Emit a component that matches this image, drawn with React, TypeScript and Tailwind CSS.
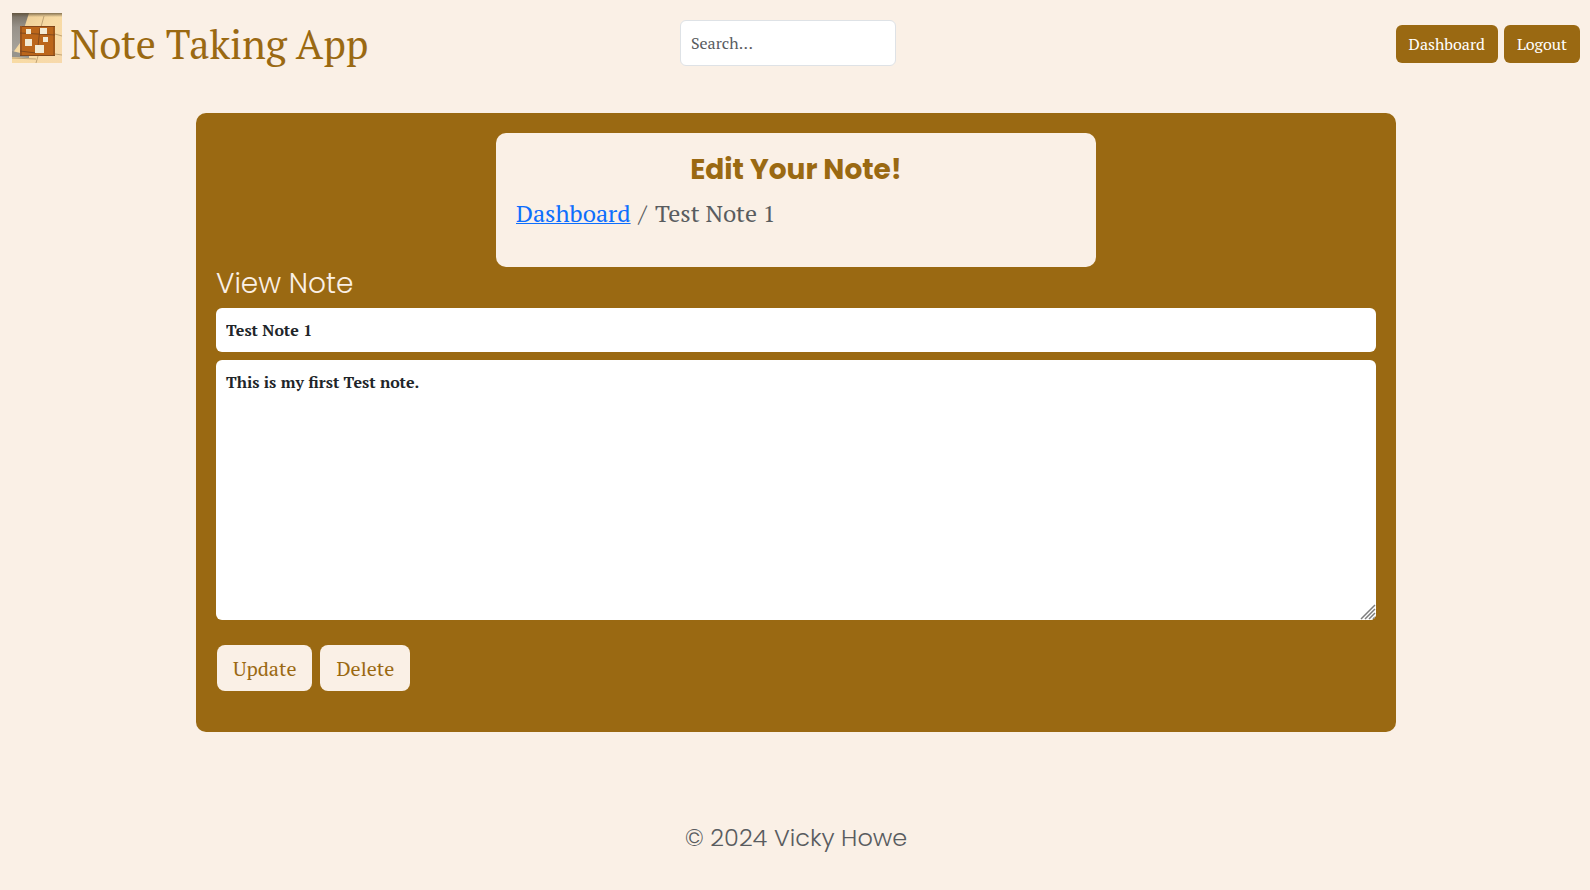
import { useState } from 'react';

const serif = "font-['PT_Serif','Liberation_Serif',serif]";
const sans = "font-['Poppins','Inter',sans-serif]";

function Logo() {
  return (
    <svg viewBox="0 0 50 50" className="size-[50px] shrink-0" aria-hidden="true">
      <defs>
        <linearGradient id="wall" x1="0" y1="0" x2="1" y2="1">
          <stop offset="0" stopColor="#e8c890" />
          <stop offset="0.5" stopColor="#f8dba4" />
          <stop offset="1" stopColor="#f7d9ac" />
        </linearGradient>
        <linearGradient id="shade" x1="0" y1="0" x2="0" y2="1">
          <stop offset="0" stopColor="#746b5e" />
          <stop offset="0.35" stopColor="#98928a" />
          <stop offset="1" stopColor="#aaa69e" />
        </linearGradient>
        <linearGradient id="top" x1="0" y1="0" x2="0" y2="1">
          <stop offset="0" stopColor="#5f5037" stopOpacity="0.75" />
          <stop offset="1" stopColor="#5f5037" stopOpacity="0" />
        </linearGradient>
      </defs>
      <rect width="50" height="50" fill="url(#wall)" />
      <path d="M0 0H17L10 22L8 30L0 41Z" fill="url(#shade)" />
      <path d="M0 38L17 42V45L0 44Z" fill="#96948d" />
      <rect width="50" height="4" fill="url(#top)" />
      <path d="M32 3L29 14M0 45L24 46M26 43L24 50M43 21L50 23M43 41L50 42" stroke="#a88c60" strokeOpacity="0.7" strokeWidth="1" fill="none" />
      <rect x="8" y="13" width="35" height="30" fill="#bb661b" />
      <path d="M8 13H43V14H8Z" fill="#83451a" />
      <path d="M8 13H10V43H8Z" fill="#9b541c" />
      <path d="M42 13V43M8 42.500H43M8 20L43 22M28 15L26 33M8 38L24 40" stroke="#70401c" strokeOpacity="0.75" strokeWidth="1" fill="none" />
      <g fill="#f3ead3">
        <rect x="14" y="16" width="5" height="5" />
        <rect x="28" y="15" width="7" height="6" />
        <rect x="13" y="26" width="7" height="7" />
        <rect x="31" y="24" width="5" height="5" />
        <rect x="23" y="32" width="9" height="8" />
      </g>
    </svg>
  );
}

function ResizeGrip() {
  return (
    <svg
      viewBox="0 0 16 16"
      className="pointer-events-none absolute right-0 bottom-0 size-4 rounded-br-md"
      aria-hidden="true"
    >
      <rect width="16" height="16" fill="#fff" />
      <path d="M1 15L15 1M5 15L15 5M9 15L15 9M13 15L15 13" stroke="#7d7d7d" strokeWidth="1.500" fill="none" />
    </svg>
  );
}

export default function App() {
  const [title, setTitle] = useState('Test Note 1');
  const [body, setBody] = useState('This is my first Test note.');
  const navButton = 'h-[38px] rounded-md bg-[#9a6912] px-[13px] text-base text-white';
  const actionButton = 'h-[46px] rounded-lg bg-[#faf0e6] px-4 pt-0.5 text-xl text-[#9a6912]';

  return (
    <div className={`min-h-screen bg-[#faf0e6] text-[#212529] ${serif}`}>
      <header className="grid grid-cols-[1fr_auto_1fr] items-start pr-[10px] pl-3">
        <a href="#home" className="mt-[13px] flex items-start gap-2 text-[#9a6912]">
          <Logo />
          <span className="mt-1 text-[40px] leading-[54px] whitespace-nowrap">Note Taking App</span>
        </a>
        <form role="search" className="mt-5 pr-4" onSubmit={(e) => e.preventDefault()}>
          <input
            type="search"
            aria-label="Search"
            placeholder="Search..."
            className="block h-[46px] w-[216px] rounded-md border border-[#dee2e6] bg-white px-[10px] text-base outline-none placeholder:text-[#595c5f]"
          />
        </form>
        <nav className="mt-[25px] flex justify-end gap-[6px]">
          <button type="button" className={navButton}>Dashboard</button>
          <button type="button" className={navButton}>Logout</button>
        </nav>
      </header>

      <div className="pl-0.5">
        <main className="mx-auto mt-[42px] max-w-[1200px] rounded-[10px] bg-[#9a6912] p-5 pb-[41px]">
          <section className="mx-auto max-w-[600px] rounded-[10px] bg-[#faf0e6] px-5 pt-[21px] pb-[35px]">
            <h1 className={`text-center text-[28px] leading-8 font-bold text-[#9a6912] ${sans}`}>Edit Your Note!</h1>
            <nav aria-label="Breadcrumb" className="mt-2 flex gap-2 text-2xl leading-[38px] text-[#595c5f]">
              <a href="#dashboard" className="text-[#0d6efd] underline decoration-1">Dashboard</a>
              <span>/</span>
              <span>Test Note 1</span>
            </nav>
          </section>

          <form onSubmit={(e) => e.preventDefault()}>
            <h2 className={`mb-2 text-[28px] leading-[33px] font-light text-[#faf0e6] ${sans}`}>View Note</h2>
            <input
              type="text"
              aria-label="Note title"
              value={title}
              onChange={(e) => setTitle(e.target.value)}
              className="block h-11 w-full rounded-md bg-white px-[10px] text-base font-bold outline-none"
            />
            <div className="relative mt-2">
              <textarea
                aria-label="Note text"
                value={body}
                onChange={(e) => setBody(e.target.value)}
                className="block h-[260px] w-full resize-y rounded-md bg-white p-[10px] text-base font-bold outline-none"
              />
              <ResizeGrip />
            </div>
            <div className="mt-[25px] flex gap-2 pl-px">
              <button type="submit" className={actionButton}>Update</button>
              <button type="button" className={actionButton}>Delete</button>
            </div>
          </form>
        </main>

        <footer className={`mt-[88px] pb-8 text-center text-2xl leading-9 font-light text-[#595c5f] ${sans}`}>
          © 2024 Vicky Howe
        </footer>
      </div>
    </div>
  );
}
